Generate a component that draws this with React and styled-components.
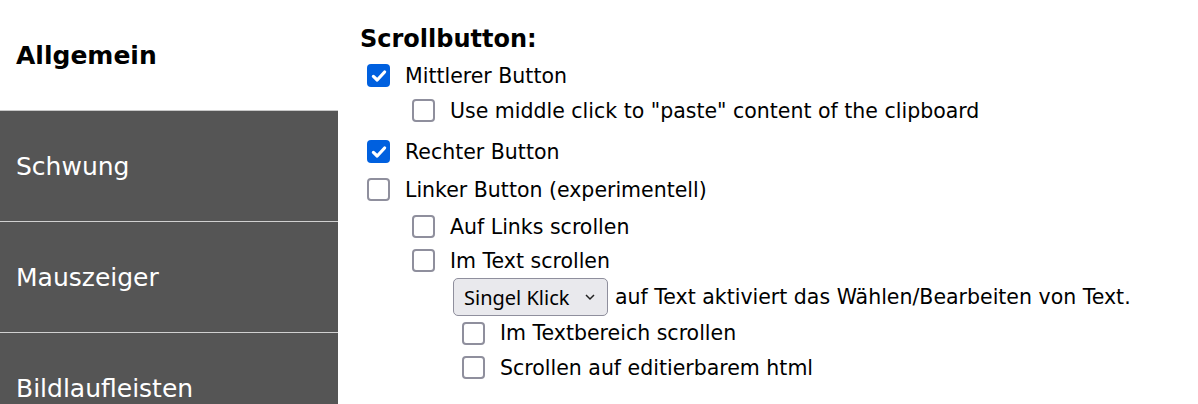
import styled, { createGlobalStyle } from "styled-components";

const GlobalStyle = createGlobalStyle`
  html, body {
    margin: 0;
    padding: 0;
    background: #ffffff;
    overflow: hidden;
  }
  body {
    font-family: "DejaVu Sans", Verdana, sans-serif;
  }
`;

const tabs = ["Allgemein", "Schwung", "Mauszeiger", "Bildlaufleisten"];

const Check = ({ checked }) => (
  <Box checked={checked}>
    {checked ? (
      <svg width="18" height="18" viewBox="0 0 18 18">
        <path
          d="M3.4 9.4 L7.2 13 L14.6 5"
          fill="none"
          stroke="#fff"
          strokeWidth="3.2"
          strokeLinecap="round"
          strokeLinejoin="round"
        />
      </svg>
    ) : null}
  </Box>
);

const Option = ({ level = 0, top = 0, h = 35, checked, children }) => (
  <Row level={level} top={top} h={h}>
    <Check checked={checked} />
    <Label>{children}</Label>
  </Row>
);

const App = () => {
  return (
    <>
      <GlobalStyle />
      <Page>
        <Sidebar>
          {tabs.map((t, i) => (
            <Tab key={t} active={i === 0}>
              {t}
            </Tab>
          ))}
        </Sidebar>
        <Content>
          <Heading>Scrollbutton:</Heading>
          <Option checked>Mittlerer Button</Option>
          <Option level={1}>
            Use middle click to "paste" content of the clipboard
          </Option>
          <Option checked top={6}>
            Rechter Button
          </Option>
          <Option top={3}>Linker Button (experimentell)</Option>
          <Option level={1} top={2}>
            Auf Links scrollen
          </Option>
          <Option level={1} top={-1}>
            Im Text scrollen
          </Option>
          <SelectRow>
            <Select>
              <span>Singel Klick</span>
              <svg width="14" height="14" viewBox="0 0 14 14">
                <path
                  d="M3 5 L7 9 L11 5"
                  fill="none"
                  stroke="#222"
                  strokeWidth="1.5"
                />
              </svg>
            </Select>
            <Label>auf Text aktiviert das Wählen/Bearbeiten von Text.</Label>
          </SelectRow>
          <Option level={2} h={34}>
            Im Textbereich scrollen
          </Option>
          <Option level={2} h={35}>
            Scrollen auf editierbarem html
          </Option>
        </Content>
      </Page>
    </>
  );
};

export default App;

// styled components
const Page = styled.div`
  display: flex;
  width: 1198px;
  height: 404px;
  overflow: hidden;
`;

const Sidebar = styled.nav`
  width: 338px;
  flex-shrink: 0;
  display: flex;
  flex-direction: column;
  background: #555555;
`;

const Tab = styled.div`
  height: 111px;
  flex-shrink: 0;
  display: flex;
  align-items: center;
  padding-left: 16px;
  box-sizing: border-box;
  font-size: 25px;
  font-weight: ${(p) => (p.active ? 700 : 400)};
  color: ${(p) => (p.active ? "#000000" : "#ffffff")};
  background: ${(p) => (p.active ? "#ffffff" : "#555555")};
  border-bottom: 1px solid ${(p) => (p.active ? "#c8c8c8" : "#d0d0d0")};
`;

const Content = styled.main`
  flex: 1;
  padding: 25px 0 0 22px;
  display: flex;
  flex-direction: column;
`;

const Heading = styled.h3`
  margin: 0 0 5px 0;
  font-size: 24px;
  line-height: 28px;
  font-weight: 700;
  color: #000;
`;

const Row = styled.div`
  display: flex;
  align-items: center;
  height: ${(p) => p.h}px;
  margin-top: ${(p) => p.top}px;
  padding-left: ${(p) => 7 + p.level * 45 + (p.level > 1 ? 5 : 0)}px;
`;

const Box = styled.span`
  width: 23px;
  height: 23px;
  box-sizing: border-box;
  border-radius: 4px;
  flex-shrink: 0;
  display: flex;
  align-items: center;
  justify-content: center;
  margin-right: 15px;
  background: ${(p) => (p.checked ? "#0060df" : "#ffffff")};
  border: ${(p) => (p.checked ? "none" : "2px solid #8f8f9d")};
`;

const Label = styled.span`
  font-size: 20.5px;
  color: #000;
  white-space: nowrap;
`;

const SelectRow = styled.div`
  display: flex;
  align-items: center;
  height: 38px;
  padding-left: 93px;
`;

const Select = styled.div`
  display: flex;
  align-items: center;
  justify-content: space-between;
  width: 155px;
  height: 38px;
  box-sizing: border-box;
  padding: 0 10px 0 10px;
  margin-right: 7px;
  background: #e9e9ed;
  border: 1px solid #8f8f9d;
  border-radius: 5px;
  font-family: "Noto Sans", sans-serif;
  font-size: 20px;
  color: #000;
`;
